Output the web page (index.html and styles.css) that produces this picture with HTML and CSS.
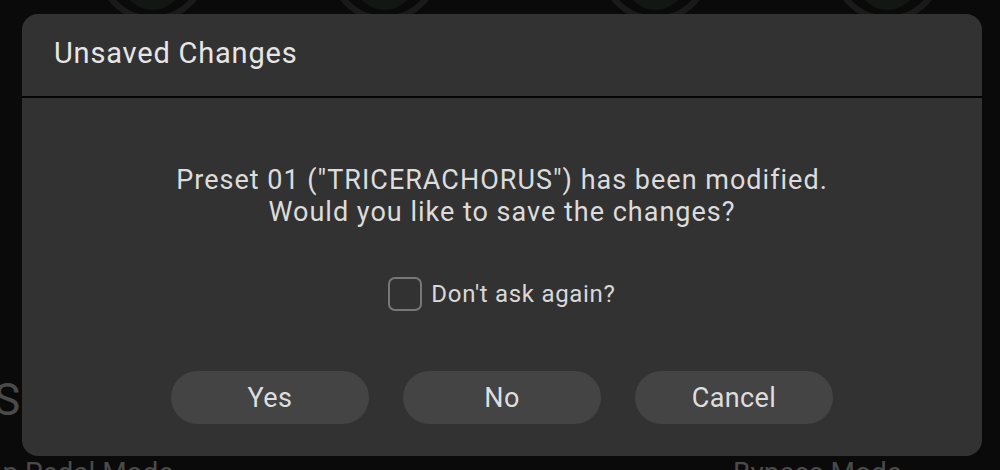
FILE: index.html
```html
<!DOCTYPE html>
<html>
<head>
<meta charset="utf-8">
<link rel="stylesheet" href="styles.css">
</head>
<body>
<div class="app">
  <div class="knob k1"></div>
  <div class="knob k2"></div>
  <div class="knob k3"></div>
  <div class="knob k4"></div>
  <div class="bg-s">S</div>
  <div class="bg-label bl1">Tap Pedal Mode</div>
  <div class="bg-label bl2">Bypass Mode</div>
</div>
<div class="dialog">
  <div class="dialog-header">Unsaved Changes</div>
  <div class="dialog-body">
    <p class="message">Preset 01 ("TRICERACHORUS") has been modified.<br>Would you like to save the changes?</p>
    <label class="check-row"><span class="checkbox"></span><span class="check-label">Don't ask again?</span></label>
    <div class="buttons">
      <button class="btn">Yes</button>
      <button class="btn">No</button>
      <button class="btn">Cancel</button>
    </div>
  </div>
</div>
</body>
</html>
```
FILE: styles.css
```css
html, body {
  margin: 0;
  padding: 0;
  width: 1000px;
  height: 470px;
  overflow: hidden;
  background: #0a0a0a;
  font-family: Roboto, "Liberation Sans", sans-serif;
}
.app {
  position: relative;
  width: 1000px;
  height: 470px;
}
.knob {
  position: absolute;
  top: -100px;
  width: 103px;
  height: 110px;
  border-radius: 50%;
  border: 6px solid #1a1a1a;
  background: #0a0a0a;
}
.knob::after {
  content: "";
  position: absolute;
  left: 13px;
  right: 13px;
  top: 0;
  bottom: 6px;
  border-radius: 50%;
  background: #121713;
}
.k1 { left: 95px; }
.k2 { left: 327px; }
.k3 { left: 598px; }
.k4 { left: 830px; }
.bg-s {
  position: absolute;
  left: -6px;
  top: 374px;
  font-size: 44px;
  color: #4a4a4a;
}
.bg-label {
  position: absolute;
  top: 456px;
  font-size: 28px;
  color: #4a4a4a;
  white-space: nowrap;
}
.bl1 { left: -28px; }
.bl2 { left: 733px; }
.dialog {
  position: absolute;
  left: 22px;
  top: 14px;
  width: 960px;
  height: 442px;
  background: #323232;
  border-radius: 16px;
  display: flex;
  flex-direction: column;
  overflow: hidden;
}
.dialog-header {
  height: 84px;
  box-sizing: border-box;
  padding: 22px 0 0 32px;
  font-size: 29px;
  letter-spacing: 0.8px;
  color: #e6e6e6;
  border-bottom: 2px solid #050505;
}
.dialog-body {
  flex: 1;
  display: flex;
  flex-direction: column;
  align-items: center;
}
.message {
  margin: 66px 0 0;
  text-align: center;
  font-size: 27px;
  letter-spacing: 1px;
  line-height: 32px;
  color: #dcdcdc;
}
.check-row {
  margin-top: 49px;
  display: flex;
  align-items: center;
  gap: 9px;
}
.checkbox {
  width: 30px;
  height: 30px;
  border: 2px solid #777;
  border-radius: 7px;
  box-sizing: content-box;
}
.check-label {
  font-size: 24px;
  letter-spacing: 0.7px;
  color: #d8d8d8;
}
.buttons {
  margin-top: 60px;
  display: flex;
  gap: 34px;
}
.btn {
  width: 198px;
  height: 53px;
  border: none;
  border-radius: 27px;
  background: #444444;
  color: #dedede;
  font-family: Roboto, "Liberation Sans", sans-serif;
  font-size: 27px;
  letter-spacing: 0.4px;
  padding: 0;
}
```
